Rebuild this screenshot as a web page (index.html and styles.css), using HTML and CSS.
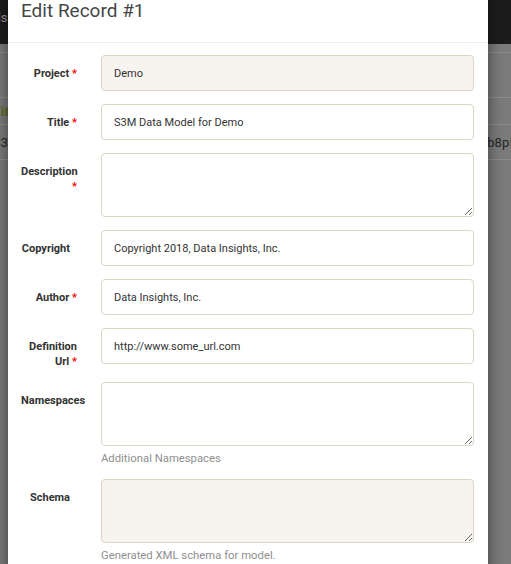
FILE: index.html
```html
<!DOCTYPE html>
<html lang="en">
<head>
<meta charset="utf-8">
<title>Edit Record #1</title>
<link rel="stylesheet" href="styles.css">
</head>
<body>
<div class="page">
  <div class="navbar"><span class="nav-link">Records</span></div>
  <div class="panel-line"></div>
  <div class="table">
    <div class="tr th"><span class="c1">Title</span><span class="c2">Key</span></div>
    <div class="tr"><span class="c1">S3M Data Model for Demo</span><span class="c2">a71cf3b8p5e2</span></div>
  </div>
</div>

<div class="modal">
  <div class="modal-header">
    <h4 class="modal-title">Edit Record #1</h4>
  </div>
  <form class="modal-body">
    <div class="row">
      <label class="lbl">Project <span class="req">*</span></label>
      <div class="ctl"><input class="field field-ro" type="text" value="Demo" readonly></div>
    </div>
    <div class="row">
      <label class="lbl">Title <span class="req">*</span></label>
      <div class="ctl"><input class="field" type="text" value="S3M Data Model for Demo"></div>
    </div>
    <div class="row">
      <label class="lbl">Description <span class="req">*</span></label>
      <div class="ctl"><textarea class="field area"></textarea></div>
    </div>
    <div class="row">
      <label class="lbl lbl-opt">Copyright</label>
      <div class="ctl"><input class="field" type="text" value="Copyright 2018, Data Insights, Inc."></div>
    </div>
    <div class="row">
      <label class="lbl">Author <span class="req">*</span></label>
      <div class="ctl"><input class="field" type="text" value="Data Insights, Inc."></div>
    </div>
    <div class="row">
      <label class="lbl">Definition Url <span class="req">*</span></label>
      <div class="ctl"><input class="field" type="text" value="http://www.some_url.com"></div>
    </div>
    <div class="row">
      <label class="lbl lbl-opt">Namespaces</label>
      <div class="ctl">
        <textarea class="field area"></textarea>
        <p class="help">Additional Namespaces</p>
      </div>
    </div>
    <div class="row">
      <label class="lbl lbl-opt">Schema</label>
      <div class="ctl">
        <textarea class="field area field-ro" readonly></textarea>
        <p class="help">Generated XML schema for model.</p>
      </div>
    </div>
  </form>
</div>
</body>
</html>
```

FILE: styles.css
```css
html, body {
  margin: 0;
  padding: 0;
}

body {
  width: 511px;
  height: 564px;
  overflow: hidden;
  position: relative;
  background: #7b7b7b;
  font-family: Roboto, "Liberation Sans", sans-serif;
}

.page {
  width: 511px;
}

.navbar {
  box-sizing: border-box;
  height: 44px;
  padding-top: 7px;
  background: #1c1c1c;
  margin-left: -40px;
}

.nav-link {
  color: #9a9a9a;
  font-size: 13px;
}

.panel-line {
  height: 8px;
  border-bottom: 1px solid #8a8a8a;
}

.table {
  margin-top: 44px;
  margin-left: -7px;
}

.tr {
  display: grid;
  grid-template-columns: 454px auto;
  height: 34px;
  align-items: center;
  border-top: 1px solid #8c8c8c;
  font-size: 13px;
  color: #262626;
  white-space: nowrap;
}

.tr:last-child {
  border-bottom: 1px solid #8c8c8c;
}

.th {
  height: 26px;
  font-weight: bold;
}

.th .c1 {
  color: #5b6b16;
}

.th .c2 {
  color: #333;
}

/* modal */
.modal {
  position: absolute;
  left: 8px;
  top: -10px;
  width: 480px;
  height: 640px;
  background: #fff;
  border-radius: 6px;
  box-shadow: 0 5px 15px rgba(0, 0, 0, 0.5);
}

.modal-header {
  box-sizing: border-box;
  height: 53px;
  padding: 11px 13px 0;
  border-bottom: 1px solid #eeeeee;
}

.modal-title {
  margin: 0;
  font-size: 19px;
  line-height: 20px;
  font-weight: 400;
  color: #474747;
}

.modal-body {
  padding: 12px 14px 0 13px;
  display: flex;
  flex-direction: column;
  gap: 13px;
}

.row {
  display: grid;
  grid-template-columns: 56px 373px;
  column-gap: 24px;
  align-items: start;
}

.lbl {
  padding-top: 11px;
  font-size: 11px;
  line-height: 15px;
  font-weight: bold;
  color: #333;
  text-align: right;
}

.lbl-opt {
  padding-right: 7px;
}

.req {
  color: #ff0000;
}

.ctl {
  display: flex;
  flex-direction: column;
}

.field {
  box-sizing: border-box;
  width: 100%;
  height: 36px;
  margin: 0;
  padding: 0 12px;
  border: 1px solid #ddd5c7;
  border-radius: 4px;
  background: #fff;
  font-family: Roboto, "Liberation Sans", sans-serif;
  font-size: 11px;
  color: #333;
  outline: none;
}

.field-ro {
  background: #f7f4ef;
}

.area {
  display: block;
  height: 64px;
  padding: 8px 12px;
  resize: vertical;
}

.help {
  margin: 5px 0 -1px;
  font-size: 11.3px;
  line-height: 16px;
  color: #8f8f8f;
}
```
